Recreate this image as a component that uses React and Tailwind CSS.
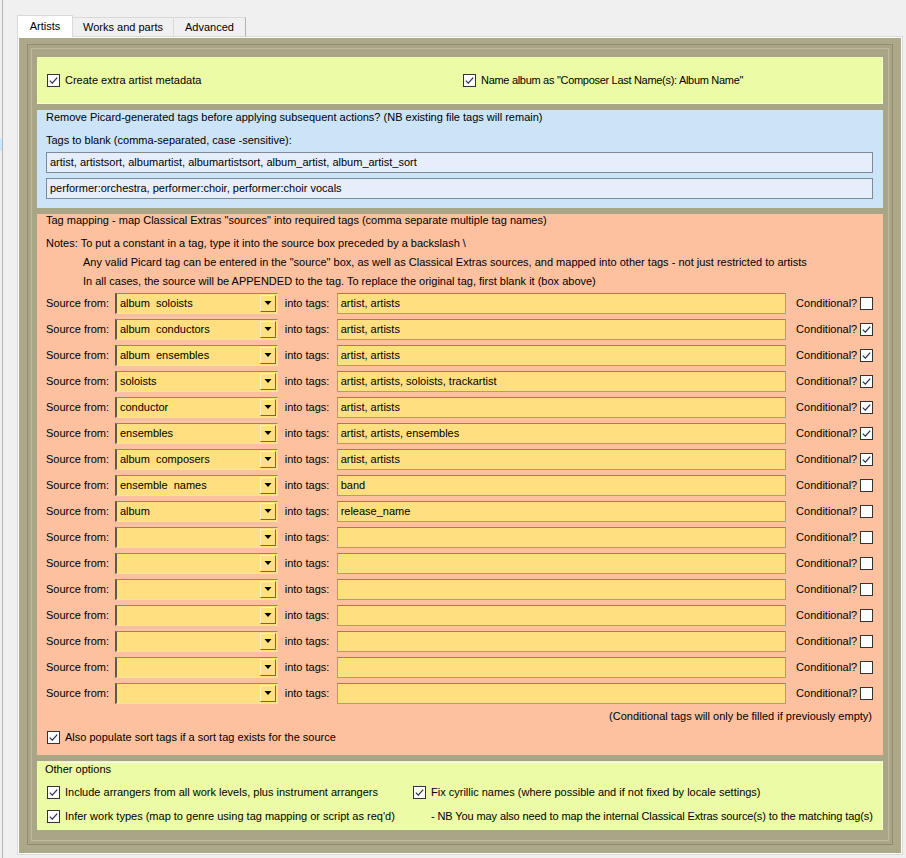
import React from 'react'

const ROWS = [
  ['album  soloists', 'artist, artists', false],
  ['album  conductors', 'artist, artists', true],
  ['album  ensembles', 'artist, artists', true],
  ['soloists', 'artist, artists, soloists, trackartist', true],
  ['conductor', 'artist, artists', true],
  ['ensembles', 'artist, artists, ensembles', true],
  ['album  composers', 'artist, artists', true],
  ['ensemble  names', 'band', false],
  ['album', 'release_name', false],
  ['', '', false],
  ['', '', false],
  ['', '', false],
  ['', '', false],
  ['', '', false],
  ['', '', false],
  ['', '', false],
]

function Check({ on }) {
  return (
    <span className="w-[13px] h-[13px] shrink-0 border border-[#333] bg-white flex items-center justify-center">
      {on && (
        <svg width="11" height="11" viewBox="0 0 11 11">
          <path d="M1.8 5.6 L4.3 8.1 L9.2 2.6" fill="none" stroke="#1f2d4d" strokeWidth="1.2" />
        </svg>
      )}
    </span>
  )
}

function CheckLabel({ on, children, className = '' }) {
  return (
    <div className={`flex items-center gap-[5px] ${className}`}>
      <Check on={on} />
      <span>{children}</span>
    </div>
  )
}

function Combo({ value }) {
  return (
    <div className="w-[163px] h-[21px] flex bg-[#ffdf80] border border-t-[#8a8a80] border-l-2 border-l-[#5e5a50] border-r-[#f0dca0] border-b-[#f3e2a8]">
      <span className="flex-1 pl-[3px] leading-[19px] whitespace-pre">{value}</span>
      <span className="w-[16px] my-[1px] mr-[1px] flex items-center justify-center bg-[#ffe085] border-r border-b border-r-[#7a6a30] border-b-[#7a6a30] border-l border-t border-l-[#fff3c0] border-t-[#fff3c0]">
        <svg width="8" height="6" viewBox="0 0 8 6">
          <path d="M0.5 1 L7.5 1 L4 5 Z" fill="#000" />
        </svg>
      </span>
    </div>
  )
}

export default function App() {
  return (
    <div className="w-[906px] h-[858px] bg-[#f0f0f0] flex overflow-hidden whitespace-nowrap text-[11px] text-black font-['Liberation_Sans',Arial,sans-serif]">
      {/* left edge of the neighbouring pane */}
      <div className="w-[3px] h-full border-r border-[#b4b4b4] flex flex-col">
        <div className="h-[138px]" />
        <div className="h-[13px] bg-[#cce8ff]" />
      </div>

      <div className="ml-[14px] pt-[15px] flex flex-col">
        {/* tabs */}
        <div className="flex items-end h-[21px] relative z-10">
          <div className="w-[56px] h-[22px] -mb-[1px] bg-white border border-b-0 border-[#d9d9d9] flex items-center justify-center pb-[1px]">Artists</div>
          <div className="w-[101px] h-[19px] bg-[#f0f0f0] border border-l-0 border-b-0 border-[#d9d9d9] flex items-center justify-center">Works and parts</div>
          <div className="w-[72px] h-[19px] bg-[#f0f0f0] border border-l-0 border-b-0 border-[#d9d9d9] border-r-[#b0b0b0] flex items-center justify-center">Advanced</div>
        </div>

        {/* tab pane */}
        <div className="w-[886px] h-[819px] border border-[#d9d9d9] bg-white p-[1px]">
          <div className="h-full bg-[#aba989] pl-[8px] pt-[6px] pr-[8px] pb-[8px]">
            <div className="h-full border border-[#8e8c6d] bg-[#a8a686] p-[3px]">
              <div className="h-full border border-[#bebc9d] pl-[5px] pt-[8px] pr-[5px] pb-[10px] flex flex-col gap-[6px]">
                {/* section 1 */}
                <div className="h-[47px] bg-[#ecfba6] flex items-center pl-[10px] border-r border-b border-[#f6ffd0]">
                  <CheckLabel on className="w-[416px]">Create extra artist metadata</CheckLabel>
                  <CheckLabel on><span className="tracking-[-0.3px]">Name album as "Composer Last Name(s): Album Name"</span></CheckLabel>
                </div>

                {/* section 2 */}
                <div className="bg-[#cce4f8] pl-[9px] pr-[10px] pb-[9px] flex flex-col">
                  <div className="leading-[14px] h-[14px]">Remove Picard-generated tags before applying subsequent actions? (NB existing file tags will remain)</div>
                  <div className="leading-[14px] h-[14px] mt-[9px]">Tags to blank (comma-separated, case -sensitive):</div>
                  <div className="mt-[5px] h-[21px] bg-[#e6eefb] border border-[#7f8a96] pl-[3px] leading-[19px]">artist, artistsort, albumartist, albumartistsort, album_artist, album_artist_sort</div>
                  <div className="mt-[5px] h-[21px] bg-[#e6eefb] border border-[#7f8a96] pl-[3px] leading-[19px]">performer:orchestra, performer:choir, performer:choir vocals</div>
                </div>

                {/* section 3 */}
                <div className="bg-[#fdc1a0] pl-[9px] pr-[10px] pb-[7px] flex flex-col">
                  <div className="leading-[12px] h-[12px]">Tag mapping - map Classical Extras "sources" into required tags (comma separate multiple tag names)</div>
                  <div className="mt-[8px] flex flex-col">
                    <div className="h-[19px] leading-[19px]">Notes: To put a constant in a tag, type it into the source box preceded by a backslash \</div>
                    <div className="h-[19px] leading-[19px] pl-[37px]">Any valid Picard tag can be entered in the "source" box, as well as Classical Extras sources, and mapped into other tags - not just restricted to artists</div>
                    <div className="h-[19px] leading-[19px] pl-[37px]">In all cases, the source will be APPENDED to the tag. To replace the original tag, first blank it (box above)</div>
                  </div>
                  <div className="-mt-[1px] flex flex-col">
                    {ROWS.map(([src, tags, cond], i) => (
                      <div key={i} className="h-[26px] flex items-center">
                        <span className="w-[69px]">Source from:</span>
                        <Combo value={src} />
                        <span className="ml-[7px] w-[52px]">into tags:</span>
                        <div className="w-[450px] h-[21px] bg-[#ffdf80] border border-[#a09e8e] border-t-[#85847a] pl-[3px] leading-[19px]">{tags}</div>
                        <span className="ml-[10px] w-[64px]">Conditional?</span>
                        <Check on={cond} />
                      </div>
                    ))}
                  </div>
                  <div className="h-[21px] flex items-center justify-end pr-[1px]">(Conditional tags will only be filled if previously empty)</div>
                  <div className="h-[21px] flex items-center pl-[1px]">
                    <CheckLabel on>Also populate sort tags if a sort tag exists for the source</CheckLabel>
                  </div>
                </div>

                {/* section 4 */}
                <div className="flex-1 bg-[#ecfba6] pl-[8px] pt-[1px] pb-[1px] flex flex-col border-r border-[#f6ffd0]">
                  <div className="leading-[13px] h-[13px] border-t border-[#f7ffd6]">Other options</div>
                  <div className="mt-[7px] h-[20px] flex items-center pl-[2px]">
                    <CheckLabel on className="w-[366px]">Include arrangers from all work levels, plus instrument arrangers</CheckLabel>
                    <CheckLabel on>Fix cyrillic names (where possible and if not fixed by locale settings)</CheckLabel>
                  </div>
                  <div className="mt-[4px] h-[20px] flex items-center pl-[2px]">
                    <CheckLabel on className="w-[384px]">Infer work types (map to genre using tag mapping or script as req'd)</CheckLabel>
                    <span className="tracking-[-0.11px]">- NB You may also need to map the internal Classical Extras source(s) to the matching tag(s)</span>
                  </div>
                </div>
              </div>
            </div>
          </div>
        </div>
      </div>
    </div>
  )
}
